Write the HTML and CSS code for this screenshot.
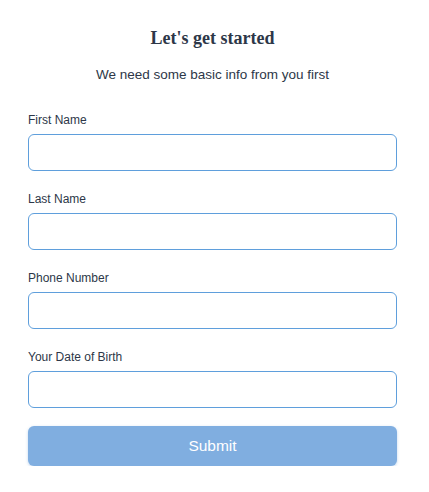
FILE: index.html
```html
<!DOCTYPE html>
<html>
<head>
<meta charset="utf-8">
<link rel="stylesheet" href="styles.css">
</head>
<body>
<div class="page">
  <h1 class="title">Let's get started</h1>
  <p class="subtitle">We need some basic info from you first</p>
  <form class="form">
    <div class="fields">
      <label class="field">
        <span class="label">First Name</span>
        <input class="input" type="text">
      </label>
      <label class="field">
        <span class="label">Last Name</span>
        <input class="input" type="text">
      </label>
      <label class="field">
        <span class="label">Phone Number</span>
        <input class="input" type="text">
      </label>
      <label class="field">
        <span class="label">Your Date of Birth</span>
        <input class="input" type="text">
      </label>
    </div>
    <button class="submit" type="button">Submit</button>
  </form>
</div>
</body>
</html>
```
FILE: styles.css
```css
html, body {
  margin: 0;
  padding: 0;
  background: #ffffff;
}
.page {
  width: 369px;
  margin-left: 28px;
  padding-top: 27px;
  color: #2d3748;
  font-family: "Liberation Sans", Arial, sans-serif;
}
.title {
  margin: 0;
  text-align: center;
  font-family: "Liberation Serif", "Times New Roman", serif;
  font-weight: bold;
  font-size: 18px;
  line-height: 22px;
}
.subtitle {
  margin: 17px 0 0;
  text-align: center;
  font-size: 13.5px;
  line-height: 18px;
}
.form {
  display: flex;
  flex-direction: column;
  margin-top: 28px;
}
.fields {
  display: flex;
  flex-direction: column;
  gap: 20px;
}
.field {
  display: flex;
  flex-direction: column;
}
.label {
  font-size: 12px;
  line-height: 16px;
  margin-bottom: 6px;
}
.input {
  box-sizing: border-box;
  height: 37px;
  width: 100%;
  border: 1px solid #5f9fdc;
  border-radius: 6px;
  margin: 0;
  padding: 0 10px;
  background: #fff;
  outline: none;
}
.submit {
  box-sizing: border-box;
  margin-top: 18px;
  height: 40px;
  width: 100%;
  border: none;
  border-radius: 6px;
  background: #80aee0;
  color: #ffffff;
  font-family: "Liberation Sans", Arial, sans-serif;
  font-size: 15.5px;
  box-shadow: 0 1px 3px rgba(128, 174, 224, 0.5);
}
```
